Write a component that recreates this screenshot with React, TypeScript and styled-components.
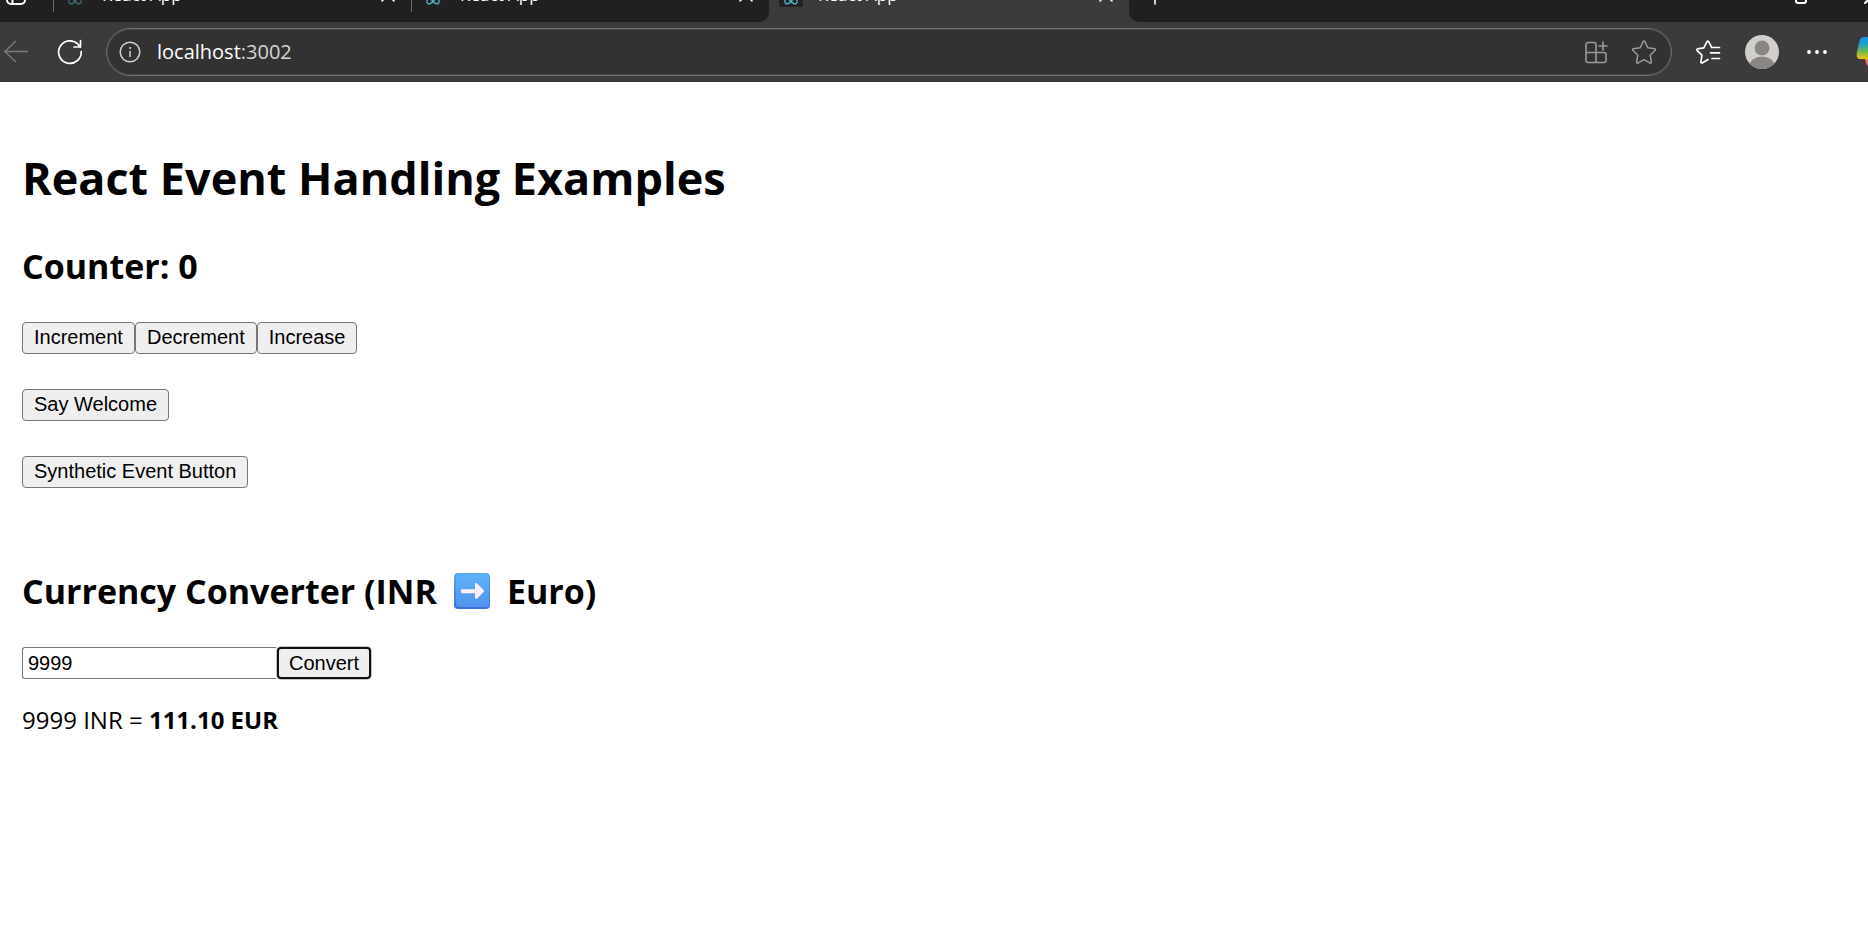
import { useState } from "react";
import type { FormEvent } from "react";
import styled, { createGlobalStyle } from "styled-components";

const GlobalStyle = createGlobalStyle`
  *, *::before, *::after { box-sizing: border-box; }
  body {
    margin: 0;
    background: #ffffff;
    color: #000000;
    font-family: "Open Sans", "Noto Sans", sans-serif;
    overflow-x: hidden;
  }
`;

/* ---------- browser chrome ---------- */

const Chrome = styled.header`
  background: #3b3b3b;
  color: #ffffff;
`;

const TabStrip = styled.div`
  display: flex;
  align-items: flex-end;
  height: 22px;
  overflow: hidden;
  background: #3b3b3b;
`;

const StripSection = styled.div<{ $grow?: boolean; $left?: boolean; $right?: boolean }>`
  display: flex;
  align-items: center;
  flex: ${(p) => (p.$grow ? "1 1 0" : "none")};
  height: 54px;
  min-width: 0;
  background: #202020;
  border-bottom-left-radius: ${(p) => (p.$left ? "10px" : "0")};
  border-bottom-right-radius: ${(p) => (p.$right ? "10px" : "0")};
`;

const ChromeButton = styled.button<{ $width: number; $color?: string; $inset?: number }>`
  display: flex;
  align-items: center;
  justify-content: ${(p) => (p.$inset === undefined ? "center" : "flex-start")};
  flex: none;
  width: ${(p) => p.$width}px;
  height: 36px;
  padding: 0 0 0 ${(p) => p.$inset ?? 0}px;
  border: 0;
  background: none;
  color: ${(p) => p.$color ?? "#ffffff"};
  svg { display: block; flex: none; }
`;

const Tab = styled.div<{ $active?: boolean }>`
  display: flex;
  align-items: center;
  flex: none;
  width: ${(p) => (p.$active ? 360 : 358)}px;
  height: 54px;
  padding-left: 10px;
  background: ${(p) => (p.$active ? "#3b3b3b" : "transparent")};
`;

const Divider = styled.span`
  flex: none;
  width: 1px;
  height: 34px;
  margin-right: -1px;
  background: #6a6a6a;
`;

const Favicon = styled.span<{ $dim?: boolean }>`
  display: flex;
  flex: none;
  width: 24px;
  height: 24px;
  margin-right: 15px;
  border-radius: 3px;
  background: #222222;
  svg { opacity: ${(p) => (p.$dim ? 0.5 : 1)}; }
`;

const TabTitle = styled.span`
  flex: 1;
  font-size: 17px;
  line-height: 24px;
  white-space: nowrap;
`;

const Spacer = styled.span`
  flex: 1;
`;

const Toolbar = styled.div`
  display: flex;
  align-items: center;
  height: 60px;
  overflow: hidden;
  border-bottom: 1px solid #333333;
`;

const AddressBar = styled.div`
  display: flex;
  align-items: center;
  flex: 1;
  min-width: 0;
  height: 48px;
  margin-right: 12px;
  padding: 0 3px 0 6px;
  border: 1px solid #6e6e6e;
  border-radius: 24px;
  background: #323232;
  box-shadow: inset 0 0 0 1px #484848;
`;

const Url = styled.span`
  flex: 1;
  margin-left: 10px;
  font-size: 20px;
  line-height: 28px;
  color: #d6d6d6;
  b { font-weight: 400; color: #ffffff; }
`;

/* ---------- page ---------- */

const Page = styled.main`
  padding: 64px 22px 24px;
`;

const Title = styled.h1`
  margin: 0 0 32px;
  font-size: 45px;
  line-height: 64px;
  font-weight: 700;
`;

const Heading = styled.h2`
  display: flex;
  align-items: center;
  margin: 0 0 32px;
  font-size: 34px;
  line-height: 48px;
  font-weight: 700;
  svg { flex: none; margin: 0 17px; }
`;

const Row = styled.div<{ $gap: number }>`
  display: flex;
  margin-bottom: ${(p) => p.$gap}px;
`;

const Button = styled.button<{ $ring?: boolean }>`
  height: 32px;
  padding: 0 11px 2px;
  border: 1px solid #767676;
  border-radius: 4px;
  background: #efefef;
  color: #000000;
  font-family: "Liberation Sans", Arial, sans-serif;
  font-size: 20px;
  line-height: 28px;
  ${(p) => p.$ring && "border: 2px solid #101010; padding: 0 10px; box-shadow: 0 0 0 1px #c4c4c4;"}
`;

const Form = styled.form`
  display: flex;
  margin-bottom: 25px;
`;

const AmountInput = styled.input`
  width: 255px;
  height: 32px;
  padding: 0 5px;
  border: 1px solid #767676;
  border-right-color: #ffffff;
  border-radius: 3px 0 0 3px;
  background: #ffffff;
  color: #000000;
  font-family: "Liberation Sans", Arial, sans-serif;
  font-size: 20px;
  line-height: 28px;
`;

const Result = styled.p`
  margin: 0;
  font-size: 24px;
  line-height: 32px;
`;

/* ---------- icons ---------- */

const stroke = {
  fill: "none",
  stroke: "currentColor",
  strokeWidth: 1.6,
  strokeLinecap: "round" as const,
  strokeLinejoin: "round" as const,
};

const ReactLogo = () => (
  <svg width="24" height="24" viewBox="0 0 24 24" fill="none" stroke="#58c4dc" strokeWidth="1.2">
    <circle cx="12" cy="12" r="1.6" fill="#58c4dc" />
    <ellipse cx="12" cy="12" rx="10" ry="4" />
    <ellipse cx="12" cy="12" rx="10" ry="4" transform="rotate(60 12 12)" />
    <ellipse cx="12" cy="12" rx="10" ry="4" transform="rotate(120 12 12)" />
  </svg>
);

const CloseIcon = () => (
  <svg width="14" height="14" viewBox="0 0 14 14" {...stroke}>
    <path d="M1 1 13 13M13 1 1 13" />
  </svg>
);

const PanesIcon = () => (
  <svg width="20" height="20" viewBox="0 0 20 20" {...stroke} strokeWidth="2">
    <rect x="1" y="1" width="18" height="18" rx="4" />
    <path d="M6.500 7v12M1 7h18" />
  </svg>
);

const BackIcon = () => (
  <svg width="24" height="24" viewBox="0 0 24 24" {...stroke} strokeWidth="1.400">
    <path d="M23.500 11.500H.8M11.500 1.500 .8 11.500l10.700 10" />
  </svg>
);

const RefreshIcon = () => (
  <svg width="26" height="26" viewBox="0 0 26 26" {...stroke} strokeWidth="1.700">
    <path d="M24.200 12.500A11.300 11.300 0 1 1 21 5.200L23.300 8M23.500 1.500V8H17" />
  </svg>
);

const InfoIcon = () => (
  <svg width="22" height="22" viewBox="0 0 22 22" {...stroke} strokeWidth="1.500">
    <circle cx="11" cy="11" r="9.800" />
    <path d="M11 10.500v5" />
    <circle cx="11" cy="7" r=".6" fill="currentColor" strokeWidth="1" />
  </svg>
);

const AppsIcon = () => (
  <svg width="24" height="24" viewBox="0 0 24 24" {...stroke} strokeWidth="1.600">
    <path d="M12 22.500H4A2 2 0 0 1 2 20.500V4.500A2 2 0 0 1 4 2.500h6a2 2 0 0 1 2 2v18M2 12.500h18a2 2 0 0 1 2 2v6a2 2 0 0 1-2 2h-8M19 2v8M15 6h8" />
  </svg>
);

const StarIcon = () => (
  <svg width="26" height="26" viewBox="0 0 26 26" {...stroke} strokeWidth="1.500">
    <path d="M12.200 2.400a.9.900 0 0 1 1.600 0l3 6.400 6.900 1a.9.900 0 0 1 .5 1.500l-5 4.900 1.200 7a.9.900 0 0 1-1.300.900L13 20.700l-6.100 3.400a.9.900 0 0 1-1.300-.9l1.200-7-5-4.900a.9.900 0 0 1 .5-1.500l6.900-1Z" />
  </svg>
);

const FavoritesIcon = () => (
  <svg width="26" height="26" viewBox="0 0 26 26" {...stroke} strokeWidth="1.700">
    <path d="M13 20.500l-5.800 3.400a.9.900 0 0 1-1.300-.9l1-6.800-4.900-4.900a.9.900 0 0 1 .5-1.500l6.300-1 3.200-6.200a.9.900 0 0 1 1.600 0L16.800 8.500M16.500 8.500h8M15.500 13.800h9M17 19.500h7.500" />
  </svg>
);

const AvatarIcon = () => (
  <svg width="34" height="34" viewBox="0 0 34 34">
    <defs>
      <clipPath id="avatar-disc">
        <circle cx="17" cy="17" r="17" />
      </clipPath>
    </defs>
    <g clipPath="url(#avatar-disc)">
      <rect width="34" height="34" fill="#d1cfcc" />
      <circle cx="17" cy="13" r="7.500" fill="#8a8683" />
      <ellipse cx="17" cy="31" rx="12.500" ry="9.500" fill="#8a8683" />
    </g>
  </svg>
);

const DotsIcon = () => (
  <svg width="22" height="6" viewBox="0 0 22 6" fill="currentColor">
    <circle cx="3" cy="3" r="1.900" />
    <circle cx="11" cy="3" r="1.900" />
    <circle cx="19" cy="3" r="1.900" />
  </svg>
);

const CopilotIcon = () => (
  <svg width="32" height="32" viewBox="0 0 32 32">
    <defs>
      <linearGradient id="copilot-top" x1="0" y1="0" x2="0" y2="1">
        <stop offset="0" stopColor="#1d8ff0" />
        <stop offset=".3" stopColor="#1b9fd8" />
        <stop offset=".65" stopColor="#6fb84a" />
        <stop offset="1" stopColor="#f6c510" />
      </linearGradient>
      <linearGradient id="copilot-base" x1="0" y1="0" x2="0" y2="1">
        <stop offset="0" stopColor="#f59a2c" />
        <stop offset="1" stopColor="#f0527a" />
      </linearGradient>
    </defs>
    <path d="M8 19h14v12h-7c-4 0-5-3-5.500-6Z" fill="url(#copilot-base)" />
    <path d="M8 1h16L18 22c-1 2-3 1-6 1H4c-3 0-4-3-3-7L3.500 5c1-3 2-4 4.500-4Z" fill="url(#copilot-top)" />
  </svg>
);

const RightArrowEmoji = () => (
  <svg width="36" height="36" viewBox="0 0 36 36" role="img" aria-label="to">
    <defs>
      <linearGradient id="arrow-tile" x1="0" y1="0" x2="0" y2="1">
        <stop offset="0" stopColor="#5eb3fb" />
        <stop offset="1" stopColor="#5293ee" />
      </linearGradient>
      <linearGradient id="arrow-edge" x1="0" y1="0" x2="0" y2="1">
        <stop offset="0" stopColor="#58a9f4" />
        <stop offset="1" stopColor="#3d6bdc" />
      </linearGradient>
    </defs>
    <rect width="36" height="36" rx="4" fill="url(#arrow-edge)" />
    <rect x="2" y="1" width="33" height="33" rx="3" fill="url(#arrow-tile)" />
    <path d="M8 16.200h13V11.500c0-1.500 1.300-1.900 2.200-1l6.400 6.600c.6.600.6 1.300 0 1.900l-6.400 6.600c-.9.900-2.200.5-2.200-1v-4.400H8a1 1 0 0 1-1-1v-2a1 1 0 0 1 1-1Z" fill="#fdeffb" />
  </svg>
);

/* ---------- app ---------- */

const BrowserTab = ({ active, dim }: { active?: boolean; dim?: boolean }) => (
  <Tab $active={active}>
    <Favicon $dim={dim}>
      <ReactLogo />
    </Favicon>
    <TabTitle>React App</TabTitle>
    <ChromeButton type="button" $width={46} aria-label="Close tab">
      <CloseIcon />
    </ChromeButton>
  </Tab>
);

const BrowserChrome = () => (
  <Chrome>
    <TabStrip>
      <StripSection $right>
        <ChromeButton type="button" $width={53} $inset={6} aria-label="Tab actions">
          <PanesIcon />
        </ChromeButton>
        <Divider />
        <BrowserTab dim />
        <Divider />
        <BrowserTab />
      </StripSection>
      <BrowserTab active />
      <StripSection $grow $left>
        <ChromeButton type="button" $width={52} aria-label="New tab">
          <svg width="20" height="20" viewBox="0 0 20 20" {...stroke}>
            <path d="M10 1v18M1 10h18" />
          </svg>
        </ChromeButton>
        <Spacer />
        <ChromeButton type="button" $width={70} aria-label="Restore window">
          <svg width="14" height="18" viewBox="0 0 14 18" {...stroke} strokeWidth="2">
            <rect x="2" y="5" width="10" height="12" rx="2" />
          </svg>
        </ChromeButton>
        <ChromeButton type="button" $width={32} $inset={28} aria-label="Close window">
          <svg width="18" height="18" viewBox="0 0 18 18" {...stroke} strokeWidth="2">
            <path d="M1 17 17 1M1 1l16 16" />
          </svg>
        </ChromeButton>
      </StripSection>
    </TabStrip>
    <Toolbar>
      <ChromeButton type="button" $width={34} $inset={4} $color="#7b7b7b" aria-label="Back">
        <BackIcon />
      </ChromeButton>
      <ChromeButton type="button" $width={72} aria-label="Refresh">
        <RefreshIcon />
      </ChromeButton>
      <AddressBar>
        <ChromeButton type="button" $width={34} $color="#d0d0d0" aria-label="Site information">
          <InfoIcon />
        </ChromeButton>
        <Url>
          <b>localhost</b>:3002
        </Url>
        <ChromeButton type="button" $width={48} $color="#9a9a9a" aria-label="Apps">
          <AppsIcon />
        </ChromeButton>
        <ChromeButton type="button" $width={48} $color="#9a9a9a" aria-label="Add to favorites">
          <StarIcon />
        </ChromeButton>
      </AddressBar>
      <ChromeButton type="button" $width={48} aria-label="Favorites">
        <FavoritesIcon />
      </ChromeButton>
      <ChromeButton type="button" $width={60} aria-label="Profile">
        <AvatarIcon />
      </ChromeButton>
      <ChromeButton type="button" $width={50} aria-label="Settings and more">
        <DotsIcon />
      </ChromeButton>
      <ChromeButton type="button" $width={26} $inset={14} aria-label="Copilot">
        <CopilotIcon />
      </ChromeButton>
    </Toolbar>
  </Chrome>
);

export default function App() {
  const [count, setCount] = useState(0);
  const [amount, setAmount] = useState("9999");
  const [converted, setConverted] = useState("9999");

  const convert = (event: FormEvent) => {
    event.preventDefault();
    setConverted(amount);
  };

  return (
    <>
      <GlobalStyle />
      <BrowserChrome />
      <Page>
        <Title>React Event Handling Examples</Title>
        <Heading>Counter: {count}</Heading>
        <Row $gap={35}>
          <Button type="button" onClick={() => setCount(count + 1)}>Increment</Button>
          <Button type="button" onClick={() => setCount(count - 1)}>Decrement</Button>
          <Button type="button" onClick={() => setCount(count + 1)}>Increase</Button>
        </Row>
        <Row $gap={35}>
          <Button type="button">Say Welcome</Button>
        </Row>
        <Row $gap={79}>
          <Button type="button">Synthetic Event Button</Button>
        </Row>
        <Heading>
          Currency Converter (INR <RightArrowEmoji /> Euro)
        </Heading>
        <Form onSubmit={convert}>
          <AmountInput
            aria-label="Amount in INR"
            value={amount}
            onChange={(event) => setAmount(event.target.value)}
          />
          <Button type="submit" $ring>Convert</Button>
        </Form>
        <Result>
          {converted} INR = <strong>{(Number(converted) / 90).toFixed(2)} EUR</strong>
        </Result>
      </Page>
    </>
  );
}
